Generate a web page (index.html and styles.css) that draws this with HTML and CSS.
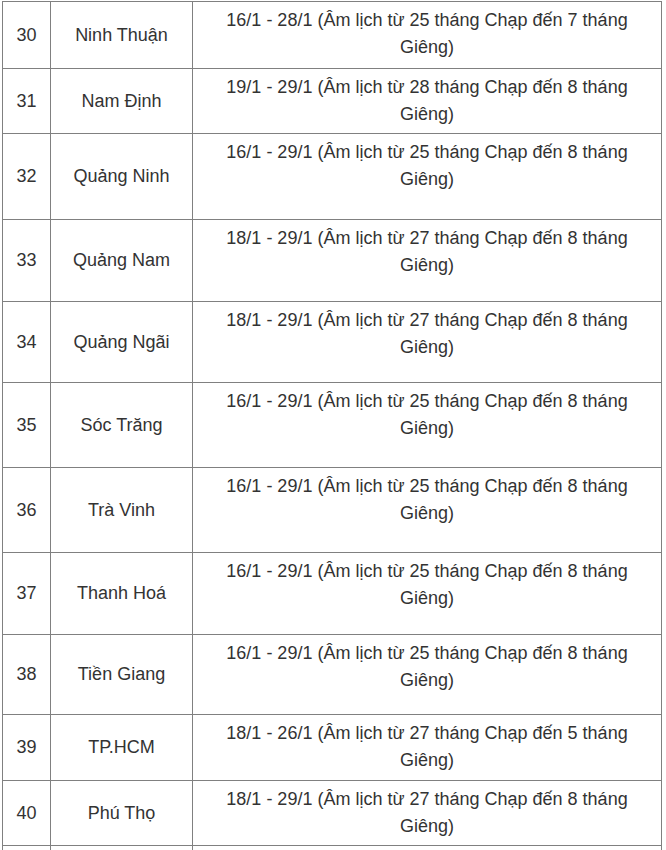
FILE: index.html
```html
<!DOCTYPE html>
<html lang="vi">
<head>
<meta charset="utf-8">
<link rel="stylesheet" href="styles.css">
</head>
<body>
<table class="schedule">
  <colgroup><col class="c-no"><col class="c-prov"><col class="c-date"></colgroup>
  <tbody>
    <tr class="h67"><td class="no">30</td><td class="prov">Ninh Thuận</td><td class="date">16/1 - 28/1 (Âm lịch từ 25 tháng Chạp đến 7 tháng Giêng)</td></tr>
    <tr class="h65"><td class="no">31</td><td class="prov">Nam Định</td><td class="date">19/1 - 29/1 (Âm lịch từ 28 tháng Chạp đến 8 tháng Giêng)</td></tr>
    <tr class="h86"><td class="no">32</td><td class="prov">Quảng Ninh</td><td class="date">16/1 - 29/1 (Âm lịch từ 25 tháng Chạp đến 8 tháng Giêng)</td></tr>
    <tr class="h82"><td class="no">33</td><td class="prov">Quảng Nam</td><td class="date">18/1 - 29/1 (Âm lịch từ 27 tháng Chạp đến 8 tháng Giêng)</td></tr>
    <tr class="h81"><td class="no">34</td><td class="prov">Quảng Ngãi</td><td class="date">18/1 - 29/1 (Âm lịch từ 27 tháng Chạp đến 8 tháng Giêng)</td></tr>
    <tr class="h85"><td class="no">35</td><td class="prov">Sóc Trăng</td><td class="date">16/1 - 29/1 (Âm lịch từ 25 tháng Chạp đến 8 tháng Giêng)</td></tr>
    <tr class="h85"><td class="no">36</td><td class="prov">Trà Vinh</td><td class="date">16/1 - 29/1 (Âm lịch từ 25 tháng Chạp đến 8 tháng Giêng)</td></tr>
    <tr class="h82"><td class="no">37</td><td class="prov">Thanh Hoá</td><td class="date">16/1 - 29/1 (Âm lịch từ 25 tháng Chạp đến 8 tháng Giêng)</td></tr>
    <tr class="h80"><td class="no">38</td><td class="prov">Tiền Giang</td><td class="date">16/1 - 29/1 (Âm lịch từ 25 tháng Chạp đến 8 tháng Giêng)</td></tr>
    <tr class="h66"><td class="no">39</td><td class="prov">TP.HCM</td><td class="date">18/1 - 26/1 (Âm lịch từ 27 tháng Chạp đến 5 tháng Giêng)</td></tr>
    <tr class="h65"><td class="no">40</td><td class="prov">Phú Thọ</td><td class="date">18/1 - 29/1 (Âm lịch từ 27 tháng Chạp đến 8 tháng Giêng)</td></tr>
    <tr class="h65"><td class="no"></td><td class="prov"></td><td class="date"></td></tr>
  </tbody>
</table>
</body>
</html>
```
FILE: styles.css
```css
html, body {
  margin: 0;
  padding: 0;
  background: #ffffff;
}
body {
  padding: 1px 0 0 2px;
  font-family: "Liberation Sans", Arial, sans-serif;
  font-size: 18px;
  color: #333333;
}
.schedule {
  border-collapse: collapse;
  width: 659px;
  table-layout: fixed;
}
.c-no { width: 48px; }
.c-prov { width: 142px; }
.c-date { width: 469px; }
.schedule td {
  border: 1px solid #808080;
  padding: 0;
  line-height: 27px;
  text-align: center;
}
.schedule .no,
.schedule .prov {
  vertical-align: middle;
}
.schedule .date {
  vertical-align: top;
  padding: 5px 20px 0;
}
.h65 { height: 65px; }
.h66 { height: 66px; }
.h67 { height: 67px; }
.h80 { height: 80px; }
.h81 { height: 81px; }
.h82 { height: 82px; }
.h85 { height: 85px; }
.h86 { height: 86px; }
```
